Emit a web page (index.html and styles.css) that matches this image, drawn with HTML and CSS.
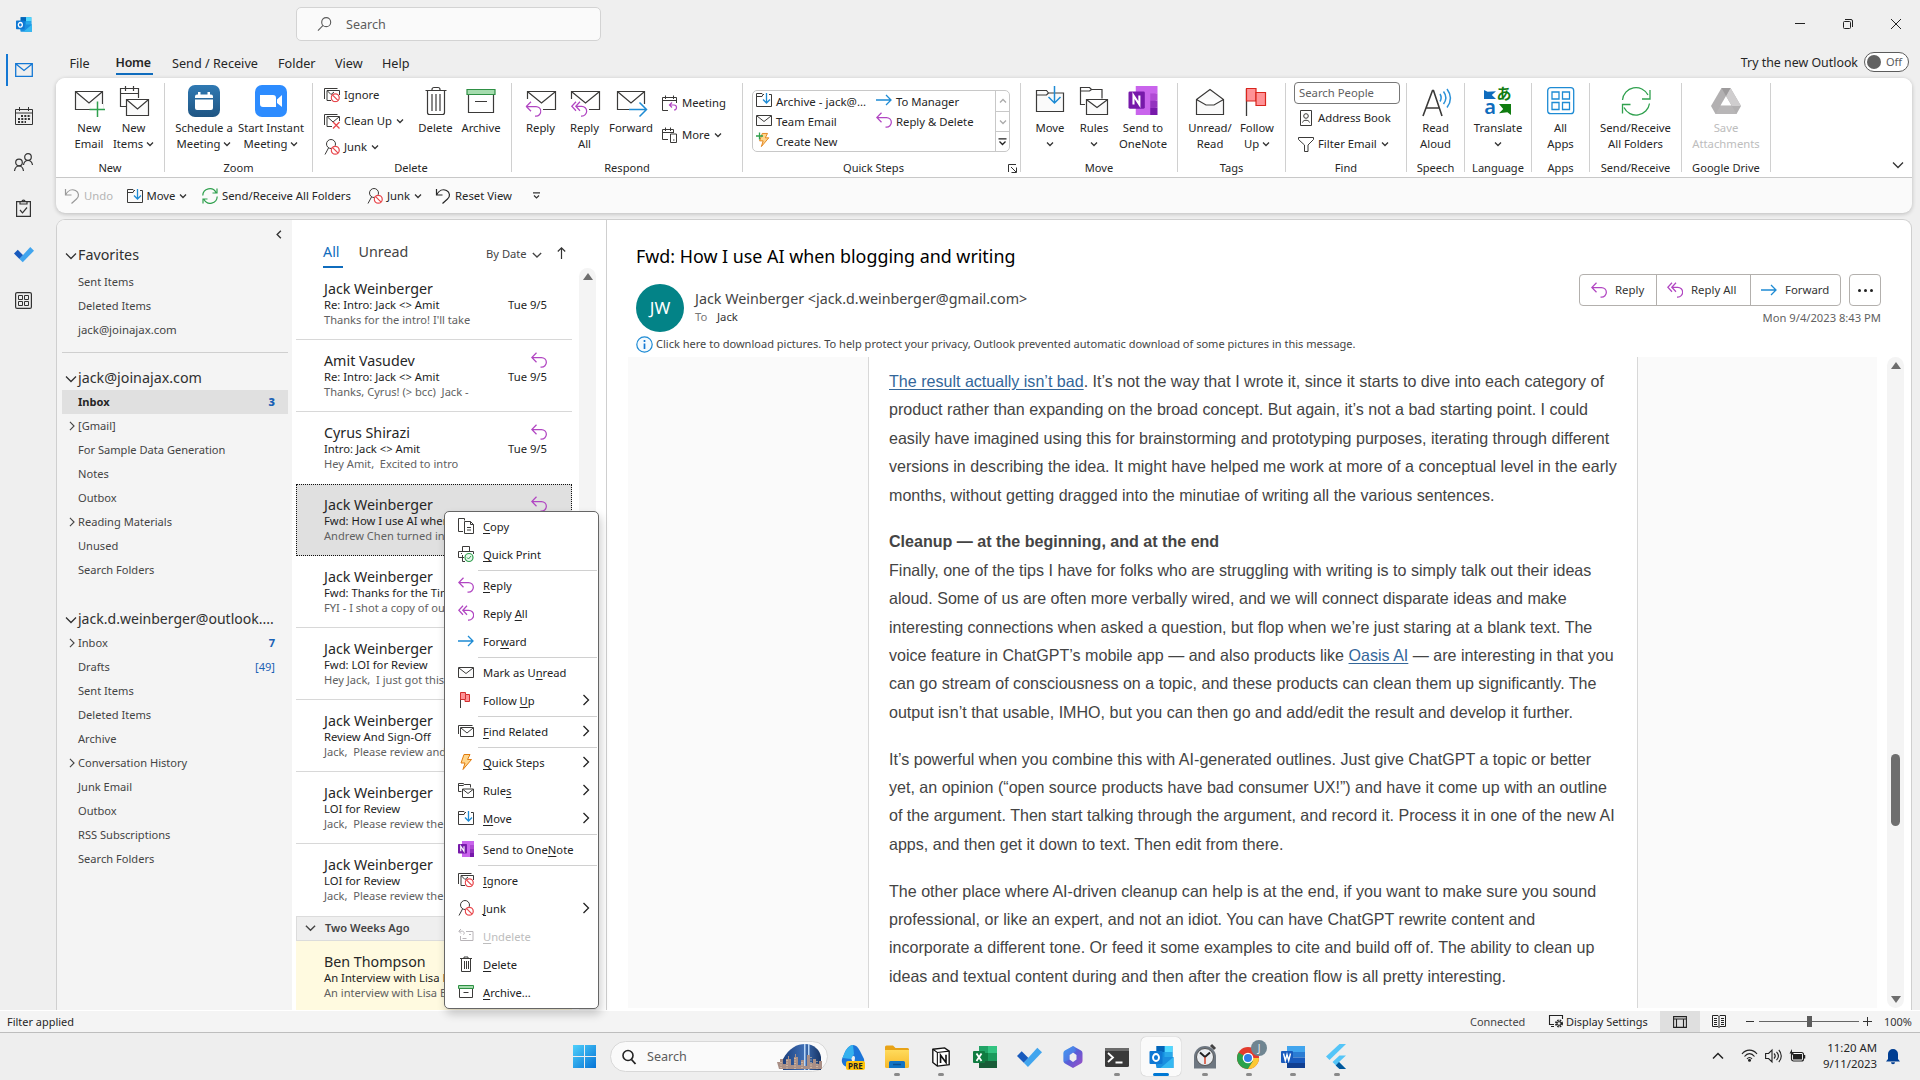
FILE: index.html
```html
<!DOCTYPE html>
<html lang="en">
<head>
<meta charset="utf-8">
<title>Inbox - Outlook</title>
<link rel="stylesheet" href="styles.css">
</head>
<body>
<svg class="defs" width="0" height="0" aria-hidden="true">
  <defs>
    <linearGradient id="g-win" x1="0" y1="0" x2="1" y2="1"><stop offset="0" stop-color="#4fd0fb"/><stop offset="1" stop-color="#0573d6"/></linearGradient>
    <linearGradient id="g-sched" x1="0" y1="0" x2="0" y2="1"><stop offset="0" stop-color="#2f79b3"/><stop offset="1" stop-color="#1f5583"/></linearGradient>
    <linearGradient id="g-365" x1="0" y1="0" x2="1" y2="1"><stop offset="0" stop-color="#3aa5f2"/><stop offset=".5" stop-color="#5b5bd6"/><stop offset="1" stop-color="#a34fc4"/></linearGradient>
    <linearGradient id="g-fold" x1="0" y1="0" x2="0" y2="1"><stop offset="0" stop-color="#ffdb5c"/><stop offset="1" stop-color="#f7b92a"/></linearGradient>
    <linearGradient id="g-sky" x1="0" y1="0" x2="1" y2="0"><stop offset="0" stop-color="#1c3f7d"/><stop offset=".55" stop-color="#3f6fb5"/><stop offset="1" stop-color="#173566"/></linearGradient>
  </defs>
  <symbol id="chev" viewBox="0 0 8 8"><path d="M1 2.5 4 5.5 7 2.5" fill="none" stroke="currentColor" stroke-width="1.3"/></symbol>
  <symbol id="chevr" viewBox="0 0 8 12"><path d="M1.5 1 6.5 6 1.5 11" fill="none" stroke="currentColor" stroke-width="1.3"/></symbol>
  <symbol id="chevd" viewBox="0 0 12 8"><path d="M1 1.5 6 6.5 11 1.5" fill="none" stroke="currentColor" stroke-width="1.3"/></symbol>
  <symbol id="mail" viewBox="0 0 16 16"><path d="M.5 3.5h15v10H.5zM1 4l7 5.5L15 4" fill="#fafafa" stroke="currentColor"/></symbol>
  <symbol id="reply" viewBox="0 0 16 16"><path d="M5.5.8.8 5.5l4.7 4.7M.8 5.5h9.7a4.6 4.6 0 0 1 0 9.7H9.5" fill="none" stroke="#b146c2" stroke-width="1.25"/></symbol>
  <symbol id="replyall" viewBox="0 0 16 16"><path d="M5 .8.8 5.3 5 9.8M9 .8 4.8 5.3 9 9.8M4.8 5.3h6a4.5 4.5 0 0 1 0 9.7H10" fill="none" stroke="#b146c2" stroke-width="1.25"/></symbol>
  <symbol id="forward" viewBox="0 0 16 16"><path d="M0 8h15M10 3l5 5-5 5" fill="none" stroke="#1e8bd4" stroke-width="1.3"/></symbol>
  <symbol id="no" viewBox="0 0 10 10"><circle cx="5" cy="5" r="4.2" fill="#fff" stroke="#e8474c" stroke-width="1.3"/><path d="M2.2 2.2l5.6 5.6" stroke="#e8474c" stroke-width="1.3"/></symbol>
  <symbol id="ignore" viewBox="0 0 16 16"><path d="M.5 12V1.500h13M7 13.500H3v-10h12.500V8M3.500 4l3.500 3.500L10 5" fill="none" stroke="#3b3a39"/><use href="#no" x="6.500" y="6" width="9.500" height="9.500"/></symbol>
  <symbol id="cleanup" viewBox="0 0 16 16"><path d="M.5 12V1.500h13M8 13.500H3v-10h12.500V8M3.500 4l5.500 5 6-5" fill="none" stroke="#3b3a39"/><path d="M9 9l6.500 6.500M15.500 9 9 15.500" stroke="#e8474c" stroke-width="1.3"/></symbol>
  <symbol id="junk" viewBox="0 0 16 16"><circle cx="7" cy="5" r="4.500" fill="none" stroke="#3b3a39"/><path d="M4.500 9 1 15.500" fill="none" stroke="#3b3a39"/><use href="#no" x="6.500" y="6.500" width="9.500" height="9.500"/></symbol>
  <symbol id="move" viewBox="0 0 16 16"><path d="M8 2.500H7L6 1.500H.5v13h15v-12H13M.5 4.500H6l1-2" fill="none" stroke="#3b3a39"/><path d="M10.500 1v9.500M7 7.500l3.500 3.500L14 7.500" fill="none" stroke="#1e8bd4" stroke-width="1.3"/></symbol>
  <symbol id="rules" viewBox="0 0 16 16"><path d="M3.500 9.500h-3v-8h5l1 1h6v3M.5 3.500H5l1.500-1M4.500 7h11v8.500h-11zM5 7.500l5 4 5-4" fill="none" stroke="#3b3a39"/></symbol>
  <symbol id="sync" viewBox="0 0 16 16"><path d="M.8 7.500A7 7 0 0 1 14 4.500M15 .5v4.500h-4.500M15.200 8.500A7 7 0 0 1 2 11.500M1 15.500V11h4.500" fill="none" stroke="currentColor" stroke-width="1.2"/></symbol>
  <symbol id="undo" viewBox="0 0 16 16"><path d="M1.500 1v6h6M1.500 7C4 2 8 .8 11.500 2.500s4 6 1 8.500L7.500 15.500" fill="none" stroke="currentColor" stroke-width="1.2"/></symbol>
  <symbol id="bin" viewBox="0 0 16 16"><path d="M2 2.500h12M6 2.500v-1.500h4v1.500M3.500 2.500v13h9v-13M6.500 5v8M8.500 5v8M10.500 5v8" fill="none" stroke="#3b3a39"/></symbol>
  <symbol id="box" viewBox="0 0 16 16"><path d="M1.500 5v8.500h13V5M5.500 8.500h5" fill="none" stroke="#3b3a39"/><path d="M.5 1.500h15v3H.5z" fill="#a5dcae" stroke="#2f9045"/></symbol>
  <symbol id="flag" viewBox="0 0 16 16"><path d="M2.500 1v15" stroke="#3b3a39"/><path d="M2.500.5h5v2h4v7h-4.500v-2H2.500z" fill="#ff9296" stroke="#d32f2f"/><path d="M7.500 2.500v5" stroke="#d32f2f"/></symbol>
  <symbol id="bolt" viewBox="0 0 16 16"><path d="M6 .5h6L9.500 5.500h4L5 15.500 7 9H3z" fill="#ffd58a" stroke="#e07b0e"/></symbol>
  <symbol id="onenote" viewBox="0 0 32 32"><path d="M8 0h22v32H8z" fill="#c964ec"/><path d="M24 8h8v8h-8z" fill="#b04ad4"/><path d="M24 16h8v8h-8z" fill="#9332bf"/><path d="M24 24h8v8h-8z" fill="#7719aa"/><path d="M30 0h2v8h-8V0z" fill="#c964ec"/><rect y="6" width="18" height="19" rx="1.500" fill="#7719aa"/><path d="M5.500 20.500v-10L12 20.500v-10" fill="none" stroke="#fff" stroke-width="2.300"/></symbol>
  <symbol id="outlook" viewBox="0 0 24 24"><path d="M7 1h16v12H7z" fill="#1490df"/><path d="M15 1h8v6h-8z" fill="#50d9ff"/><path d="M7 1h8v6H7z" fill="#0364b8"/><path d="M15 7h8v6h-8z" fill="#28a8ea"/><path d="M5 12h19v11H7z" fill="#1a8fe0"/><path d="M24 12v11H11z" fill="#35b8f1"/><rect y="6" width="13" height="13" rx="1" fill="#0f78d4"/><ellipse cx="6.500" cy="12.500" rx="3" ry="3.500" fill="none" stroke="#fff" stroke-width="1.900"/></symbol>
  <symbol id="todo" viewBox="0 0 24 24"><path d="M0 11.500 4.500 7l6.500 6.500L6.500 18z" fill="#185abd"/><path d="M6.500 18 19.500 3.500 24 8 10.500 22z" fill="#41a5ee"/></symbol>
  <symbol id="mag" viewBox="0 0 16 16"><circle cx="9.800" cy="6" r="4.800" fill="none" stroke="currentColor" stroke-width="1.200"/><path d="M6.500 9.500 1 15" stroke="currentColor" stroke-width="1.200"/></symbol>
</svg>

<div class="app">
  <nav class="rail">
    <svg class="r-logo" width="16" height="17"><use href="#outlook"/></svg>
    <span class="r-item active"><svg width="18" height="14" viewBox="0 0 18 14"><path d="M.7.7h16.600v12.600H.7zM1 1l8 6.500L17 1" fill="none" stroke="#1478d4" stroke-width="1.300"/></svg></span>
    <span class="r-item"><svg width="18" height="18" viewBox="0 0 18 18"><path d="M.5 2.500h17v15H.5zM.5 6h17M4.500 0v4M13.500 0v4" fill="none" stroke="#333"/><path d="M6 9h10M3 12h12M3 15h8" stroke="#333" stroke-width="2" stroke-dasharray="2 1.300"/></svg></span>
    <span class="r-item"><svg width="19" height="19" viewBox="0 0 19 19"><g fill="none" stroke="#333" stroke-width="1.200"><circle cx="5" cy="9.500" r="3.300"/><path d="M.5 18c.5-3.500 2-5 4.500-5s4 1.500 4.500 5"/><circle cx="14" cy="4" r="3.300"/><path d="M9.500 12c.5-3.300 2-4.500 4.500-4.500s4 1.500 4.500 4.500"/></g></svg></span>
    <span class="r-item"><svg width="15" height="18" viewBox="0 0 15 18"><path d="M.6 2.600h13.800v14.800H.6zM4 5V2.600h2a1.500 1.500 0 0 1 3 0h2V5zM4 11l2.500 2.800L11 8.500" fill="none" stroke="#333" stroke-width="1.200"/></svg></span>
    <span class="r-item"><svg width="20" height="20"><use href="#todo"/></svg></span>
    <span class="r-item"><svg width="17" height="17" viewBox="0 0 17 17"><rect x=".6" y=".6" width="15.800" height="15.800" rx="1.500" fill="none" stroke="#333" stroke-width="1.200"/><path d="M3.500 3.500h4v4h-4zM9.500 3.500h4v4h-4zM3.500 9.500h4v4h-4zM9.500 9.500h4v4h-4z" fill="none" stroke="#333"/></svg></span>
  </nav>

  <div class="shell">
    <header class="titlebar">
      <div class="search"><svg width="15" height="16"><use href="#mag"/></svg><span>Search</span></div>
      <div class="winbtns">
        <svg width="10" height="10" viewBox="0 0 10 10"><path d="M0 4.500h10" stroke="#222"/></svg>
        <svg width="10" height="10" viewBox="0 0 10 10"><path d="M2 .5h6a1.500 1.500 0 0 1 1.500 1.500v6" fill="none" stroke="#222"/><rect x=".5" y="2.500" width="7" height="7" rx="1" fill="none" stroke="#222"/></svg>
        <svg width="10" height="10" viewBox="0 0 10 10"><path d="M0 0l10 10M10 0 0 10" stroke="#222"/></svg>
      </div>
    </header>
    <div class="tabs">
      <span>File</span><span class="on">Home</span><span>Send / Receive</span><span>Folder</span><span>View</span><span>Help</span>
      <div class="trynew">Try the new Outlook <span class="toggle"><i></i>Off</span></div>
    </div>

    <section class="ribbon">
      <div class="groups">
        <div class="grp g-new"><div class="btns">
          <div class="big w44"><svg width="32" height="32" viewBox="0 0 32 32"><path d="M2.500 5.500h27v18h-27zM3 6l13 11L29 6" fill="#fafafa" stroke="#3b3a39" stroke-width="1.200"/><path d="M18 18h12v12H18z" fill="#fff"/><path d="M24.500 15.500v15.500M16.500 23.500H32" stroke="#2fa04e" stroke-width="1.500"/></svg><b>New<br>Email</b></div>
          <div class="big w45"><svg width="32" height="32" viewBox="0 0 32 32"><path d="M9 20.500H2.500v-18h18V12M2.500 7.500h18M7.500 0v5M15.500 0v5" fill="none" stroke="#3b3a39" stroke-width="1.200"/><path d="M8.500 13.500h22v16h-22zM9 14l10.500 9L30 14" fill="#fafafa" stroke="#3b3a39" stroke-width="1.200"/></svg><b>New<br>Items <svg class="cv"><use href="#chev"/></svg></b></div>
        </div><em>New</em></div>

        <div class="grp g-zoom"><div class="btns">
          <div class="big w68"><svg width="32" height="32" viewBox="0 0 32 32"><rect width="32" height="32" rx="7" fill="url(#g-sched)"/><path d="M7 11.500a2 2 0 0 1 2-2h14a2 2 0 0 1 2 2V13H7zM7 14.500h18V23a2 2 0 0 1-2 2H9a2 2 0 0 1-2-2zM10 7h2.500v4H10zM19.500 7H22v4h-2.500z" fill="#fff"/></svg><b>Schedule a<br>Meeting <svg class="cv"><use href="#chev"/></svg></b></div>
          <div class="big w66"><svg width="32" height="32" viewBox="0 0 32 32"><rect width="32" height="32" rx="7" fill="#2d8cff"/><path d="M5 10h13a3 3 0 0 1 3 3v9H8a3 3 0 0 1-3-3zM22 14.500 27 10v12l-5-4z" fill="#fff"/></svg><b>Start Instant<br>Meeting <svg class="cv"><use href="#chev"/></svg></b></div>
        </div><em>Zoom</em></div>

        <div class="grp g-del"><div class="btns">
          <div class="smalls w90">
            <div><svg><use href="#ignore"/></svg>Ignore</div>
            <div><svg><use href="#cleanup"/></svg>Clean Up <svg class="cv"><use href="#chev"/></svg></div>
            <div><svg><use href="#junk"/></svg>Junk <svg class="cv"><use href="#chev"/></svg></div>
          </div>
          <div class="big w43"><svg width="32" height="32" viewBox="0 0 32 32"><path d="M5.500 4.500h21M12 4.500v-1a2 2 0 0 1 2-2h4a2 2 0 0 1 2 2v1M7.500 4.500v22a2 2 0 0 0 2 2h13a2 2 0 0 0 2-2v-22M12 8v17M16 8v17M20 8v17" fill="none" stroke="#3b3a39" stroke-width="1.200"/></svg><b>Delete</b></div>
          <div class="big w48"><svg width="32" height="32" viewBox="0 0 32 32"><path d="M3.500 9v17.500h25V9M10 15.500h12" fill="none" stroke="#3b3a39" stroke-width="1.200"/><path d="M2 3.500h28v5H2z" fill="#a5dcae" stroke="#2f9045" stroke-width="1.200"/></svg><b>Archive</b></div>
        </div><em>Delete</em></div>

        <div class="grp g-resp"><div class="btns">
          <div class="big w43"><svg width="32" height="32" viewBox="0 0 32 32"><path d="M2.500 13V5.500h28v18H18M3 6l13.500 11L30 6" fill="none" stroke="#3b3a39" stroke-width="1.200"/><use href="#reply" x=".5" y="15" width="16" height="16"/></svg><b>Reply</b></div>
          <div class="big w45"><svg width="32" height="32" viewBox="0 0 32 32"><path d="M2.500 13V5.500h28v18H20M3 6l13.500 11L30 6" fill="none" stroke="#3b3a39" stroke-width="1.200"/><use href="#replyall" x=".5" y="15" width="19" height="16"/></svg><b>Reply<br>All</b></div>
          <div class="big w48"><svg width="32" height="32" viewBox="0 0 32 32"><path d="M14 23.500H2.500v-18h27V18M3 6l13 11L29 6" fill="none" stroke="#3b3a39" stroke-width="1.200"/><path d="M14 23.500h17.500M24.500 16.500l7 7-7 7" fill="none" stroke="#1e8bd4" stroke-width="1.500"/></svg><b>Forward</b></div>
          <div class="smalls two">
            <div><svg viewBox="0 0 16 16"><path d="M6 15.500H.5v-13h14V8M.5 5.500h14M3.500.5V4M11.500.5V4" fill="none" stroke="#3b3a39"/><path d="M10 7.500 7.500 10l2.500 2.500M7.500 10H12a2.500 2.500 0 0 1 0 5" fill="none" stroke="#b146c2" stroke-width="1.200"/></svg>Meeting</div>
            <div><svg viewBox="0 0 16 16"><path d="M6 12.500H.5v-10h11V6M.5 5.500h11M3.500.5V4M8.500.5V4M8.500 7h6v8.500h-6zM11 13h1.500" fill="none" stroke="#3b3a39"/></svg>More <svg class="cv"><use href="#chev"/></svg></div>
          </div>
        </div><em>Respond</em></div>

        <div class="grp g-qs"><div class="btns">
          <div class="qsbox">
            <div class="qscol c1">
              <div><svg><use href="#move"/></svg>Archive - jack@...</div>
              <div><svg class="dk"><use href="#mail"/></svg>Team Email</div>
              <div><svg viewBox="0 0 16 16"><use href="#bolt" x="1" width="14" height="16"/><path d="M0 4h7M3.500.5v7" stroke="#2fa04e" stroke-width="1.300"/></svg>Create New</div>
            </div>
            <div class="qscol c2">
              <div><svg><use href="#forward"/></svg>To Manager</div>
              <div><svg><use href="#reply"/></svg>Reply &amp; Delete</div>
            </div>
            <div class="qsscroll"><i><svg class="cv up"><use href="#chev"/></svg></i><i><svg class="cv"><use href="#chev"/></svg></i><i class="dk"><svg width="9" height="8" viewBox="0 0 9 8"><path d="M.5.800h8M1.500 3.500l3 3 3-3" fill="none" stroke="#222" stroke-width="1.300"/></svg></i></div>
          </div>
        </div><em>Quick Steps<svg class="launch" width="9" height="9" viewBox="0 0 9 9"><path d="M.5 8V.5H8M3 3l5 5M8.500 3.500v5h-5" fill="none" stroke="#333"/></svg></em></div>

        <div class="grp g-move"><div class="btns">
          <div class="big w44"><svg width="32" height="32" viewBox="0 0 32 32"><path d="M2.500 4.500h10l2 2.500h15v18.500h-27zM2.500 9h10l2-2" fill="#fafafa" stroke="#3b3a39" stroke-width="1.200"/><path d="M20.500 0v17M14.500 11l6 6 6-6" fill="none" stroke="#1e8bd4" stroke-width="1.500"/></svg><b>Move<br><svg class="cv"><use href="#chev"/></svg></b></div>
          <div class="big w44"><svg width="32" height="32" viewBox="0 0 32 32"><path d="M7 18.500H2.500v-17h9l2 2h10.500v9M2.500 5h9l2-1.500" fill="none" stroke="#3b3a39" stroke-width="1.200"/><path d="M8.500 13.500h21v15h-21zM9 14l10 7.500L29 14" fill="#fafafa" stroke="#3b3a39" stroke-width="1.200"/></svg><b>Rules<br><svg class="cv"><use href="#chev"/></svg></b></div>
          <div class="big w54"><svg width="32" height="29" class="on32"><use href="#onenote"/></svg><b>Send to<br>OneNote</b></div>
        </div><em>Move</em></div>

        <div class="grp g-tags"><div class="btns">
          <div class="big w50"><svg width="32" height="32" viewBox="0 0 32 32"><path d="M2.500 13.500 16 3.500l13.500 10v15h-27zM2.500 13.500l9.500 5.500h8l9.500-5.500" fill="#fafafa" stroke="#3b3a39" stroke-width="1.200"/></svg><b>Unread/<br>Read</b></div>
          <div class="big w44"><svg width="32" height="32" viewBox="0 0 32 32"><path d="M5.500 3v27" stroke="#3b3a39" stroke-width="1.300"/><path d="M5.500 2.500H15v12.500H5.500z" fill="#ff9296" stroke="#d8251d" stroke-width="1.200"/><path d="M15 6.500h9.500v13H15z" fill="#ff9296" stroke="#d8251d" stroke-width="1.200"/></svg><b>Follow<br>Up <svg class="cv"><use href="#chev"/></svg></b></div>
        </div><em>Tags</em></div>

        <div class="grp g-find"><div class="btns find">
          <div class="people">Search People</div>
          <div class="frow"><svg viewBox="0 0 16 16"><path d="M2.500.5h11v15h-11zM13.500 3v9" fill="none" stroke="#3b3a39"/><circle cx="8" cy="6" r="2.300" fill="none" stroke="#3b3a39"/><path d="M4.500 12.500c.5-3 6.500-3 7 0" fill="none" stroke="#3b3a39"/></svg>Address Book</div>
          <div class="frow"><svg viewBox="0 0 16 16"><path d="M.5 1.500h15v2L10 9v6.500H6.500V9L.5 3.500z" fill="none" stroke="#3b3a39"/></svg>Filter Email <svg class="cv"><use href="#chev"/></svg></div>
        </div><em>Find</em></div>

        <div class="grp g-sp"><div class="btns mid">
          <div class="big"><svg width="32" height="32" viewBox="0 0 32 32"><path d="M3 30 12.500 4.500h1L22 30M6 22h13" fill="none" stroke="#3b3a39" stroke-width="1.600"/><path d="M20 8c1.500 2.500 1.500 5 0 7.500M23.500 5.500c3 4 3 8.500 0 12.500M27 3c4.500 6 4.500 12.500 0 18.500" fill="none" stroke="#2b92d8" stroke-width="1.500"/></svg><b>Read<br>Aloud</b></div>
        </div><em>Speech</em></div>
        <div class="grp g-la"><div class="btns mid">
          <div class="big"><div class="trans"><i class="fl1"></i><span class="ja">あ</span><span class="la">a</span><i class="fl2"></i></div><b>Translate<br><svg class="cv"><use href="#chev"/></svg></b></div>
        </div><em>Language</em></div>
        <div class="grp g-ap"><div class="btns mid">
          <div class="big"><svg width="32" height="32" viewBox="0 0 32 32"><g fill="none" stroke="#1e8bd4" stroke-width="1.300"><rect x="2.700" y="1.700" width="26" height="26" rx="3"/><path d="M7 6h7v7H7zM17.500 6h7v7h-7zM7 16.500h7v7H7zM17.500 16.500h7v7h-7z"/></g></svg><b>All<br>Apps</b></div>
        </div><em>Apps</em></div>
        <div class="grp g-sr"><div class="btns mid">
          <div class="big"><svg width="32" height="32" viewBox="0 0 32 32"><path d="M2.500 14A13.500 13.500 0 0 1 28 9M30 4v9h-8M29.500 17.500A13.500 13.500 0 0 1 4 21.500M2.500 27.500V18.500h8" fill="none" stroke="#2fa04e" stroke-width="1.300"/></svg><b>Send/Receive<br>All Folders</b></div>
        </div><em>Send/Receive</em></div>
        <div class="grp g-gd"><div class="btns mid dim">
          <div class="big"><svg width="32" height="32" viewBox="0 0 32 32"><path d="M11.500 2h9L31 20l-4.500 8h-21L1 20z" fill="#b2b0b1"/><path d="M16 10l5.500 9.500h-11z" fill="#fff"/><path d="M20.500 2 31 20h-9L16 10z" fill="#cfcdce"/><path d="M11.500 2h9L16 10z" fill="#9d9b9c"/><path d="M10.500 20H22l4.500 8h-21z" fill="#b8b6b7"/></svg><b>Save<br>Attachments</b></div>
        </div><em>Google Drive</em></div>
        <svg class="collapse" width="12" height="8"><use href="#chevd"/></svg>
      </div>
      <div class="qat">
        <div class="q1"><svg><use href="#undo"/></svg>Undo</div>
        <div class="q2"><svg><use href="#move"/></svg>Move <svg class="cv"><use href="#chev"/></svg></div>
        <div class="q3"><svg class="grn"><use href="#sync"/></svg>Send/Receive All Folders</div>
        <div class="q4"><svg><use href="#junk"/></svg>Junk <svg class="cv"><use href="#chev"/></svg></div>
        <div class="q5"><svg><use href="#undo"/></svg>Reset View</div>
        <svg class="more" width="9" height="8" viewBox="0 0 9 8"><path d="M1 .8h7M2 3.500l2.500 2.500L7 3.500" fill="none" stroke="#333" stroke-width="1.200"/></svg>
      </div>
    </section>

    <main class="main">
      <aside class="folders">
        <svg class="fold" width="6" height="9" viewBox="0 0 8 12"><path d="M6.500 1 1.500 6l5 5" fill="none" stroke="#333" stroke-width="1.800"/></svg>
        <h3 class="fav"><svg><use href="#chevd"/></svg>Favorites</h3>
        <div class="f">Sent Items</div><div class="f">Deleted Items</div><div class="f wide">jack@joinajax.com</div>
        <hr>
        <h3><svg><use href="#chevd"/></svg>jack@joinajax.com</h3>
        <div class="f sel">Inbox<b>3</b></div>
        <div class="f"><svg><use href="#chevr"/></svg>[Gmail]</div>
        <div class="f">For Sample Data Generation</div><div class="f">Notes</div><div class="f">Outbox</div>
        <div class="f"><svg><use href="#chevr"/></svg>Reading Materials</div>
        <div class="f">Unused</div><div class="f">Search Folders</div>
        <h3 class="acct"><svg><use href="#chevd"/></svg>jack.d.weinberger@outlook....</h3>
        <div class="f"><svg><use href="#chevr"/></svg>Inbox<b>7</b></div>
        <div class="f">Drafts<b class="n">[49]</b></div>
        <div class="f">Sent Items</div><div class="f">Deleted Items</div><div class="f">Archive</div>
        <div class="f"><svg><use href="#chevr"/></svg>Conversation History</div>
        <div class="f">Junk Email</div><div class="f">Outbox</div><div class="f">RSS Subscriptions</div><div class="f">Search Folders</div>
      </aside>

      <section class="list">
        <div class="lhead"><span class="all">All</span><span class="unread">Unread</span><span class="by">By Date</span><svg width="10" height="8" viewBox="0 0 12 8"><path d="M1 1.500 6 6.500 11 1.500" fill="none" stroke="#444" stroke-width="1.600"/></svg><svg class="up" width="9" height="12" viewBox="0 0 9 12"><path d="M4.500 12V1M.8 4.500l3.700-3.700 3.700 3.700" fill="none" stroke="#333" stroke-width="1.200"/></svg></div>
        <div class="lbody">
          <div class="msgs">
            <div class="m"><h4>Jack Weinberger</h4><p>Re: Intro: Jack &lt;&gt; Amit<time>Tue 9/5</time></p><q>Thanks for the intro! I'll take</q></div>
            <div class="m"><svg><use href="#reply"/></svg><h4>Amit Vasudev</h4><p>Re: Intro: Jack &lt;&gt; Amit<time>Tue 9/5</time></p><q>Thanks, Cyrus! (&gt; bcc)&nbsp; Jack -</q></div>
            <div class="m last"><svg><use href="#reply"/></svg><h4>Cyrus Shirazi</h4><p>Intro: Jack &lt;&gt; Amit<time>Tue 9/5</time></p><q>Hey Amit,&nbsp; Excited to intro</q></div>
            <div class="m cur"><svg><use href="#reply"/></svg><h4>Jack Weinberger</h4><p>Fwd: How I use AI when</p><q>Andrew Chen turned in</q></div>
            <div class="m"><h4>Jack Weinberger</h4><p>Fwd: Thanks for the Tim</p><q>FYI - I shot a copy of ou</q></div>
            <div class="m"><h4>Jack Weinberger</h4><p>Fwd: LOI for Review</p><q>Hey Jack,&nbsp; I just got this</q></div>
            <div class="m"><h4>Jack Weinberger</h4><p>Review And Sign-Off</p><q>Jack,&nbsp; Please review and</q></div>
            <div class="m"><h4>Jack Weinberger</h4><p>LOI for Review</p><q>Jack,&nbsp; Please review the</q></div>
            <div class="m last"><h4>Jack Weinberger</h4><p>LOI for Review</p><q>Jack,&nbsp; Please review the</q></div>
            <div class="weeks"><svg width="11" height="8" viewBox="0 0 12 8"><path d="M1 1.500 6 6.500 11 1.500" fill="none" stroke="#444" stroke-width="1.500"/></svg>Two Weeks Ago</div>
            <div class="m ben"><h4>Ben Thompson</h4><p>An Interview with Lisa E</p><q>An interview with Lisa E</q></div>
          </div>
          <div class="sbar"><i class="tri"></i></div>
        </div>
      </section>

      <article class="read">
        <h1>Fwd: How I use AI when blogging and writing</h1>
        <div class="from">
          <div class="ava">JW</div>
          <div class="who"><div>Jack Weinberger &lt;jack.d.weinberger@gmail.com&gt;</div><small><span>To</span>Jack</small></div>
          <div class="acts">
            <div class="row">
              <div class="seg"><span class="s1"><svg><use href="#reply"/></svg>Reply</span><span class="s2"><svg><use href="#replyall"/></svg>Reply All</span><span class="s3"><svg><use href="#forward"/></svg>Forward</span></div>
              <div class="dots"><i></i><i></i><i></i></div>
            </div>
            <time>Mon 9/4/2023 8:43 PM</time>
          </div>
        </div>
        <div class="info"><svg width="17" height="17" viewBox="0 0 17 17"><circle cx="8.500" cy="8.500" r="7.700" fill="#f5fafe" stroke="#1e8bd4" stroke-width="1.200"/><path d="M8.500 7.500V13M8.500 4v2" stroke="#1478d4" stroke-width="1.700"/></svg>Click here to download pictures. To help protect your privacy, Outlook prevented automatic download of some pictures in this message.</div>
        <div class="bodywrap">
          <div class="gutter">
            <div class="mailtext">
              <p><a>The result actually isn’t bad</a>. It’s not the way that I wrote it, since it starts to dive into each category of<br>product rather than expanding on the broad concept. But again, it’s not a bad starting point. I could<br>easily have imagined using this for brainstorming and prototyping purposes, iterating through different<br>versions in describing the idea. It might have helped me work at more of a conceptual level in the early<br>months, without getting dragged into the minutiae of writing all the various sentences.</p>
              <p><b>Cleanup — at the beginning, and at the end</b><br>Finally, one of the tips I have for folks who are struggling with writing is to simply talk out their ideas<br>aloud. Some of us are often more verbally wired, and we will connect disparate ideas and make<br>interesting connections when asked a question, but flop when we’re just staring at a blank text. The<br>voice feature in ChatGPT’s mobile app — and also products like <a>Oasis AI</a> — are interesting in that you<br>can go stream of consciousness on a topic, and these products can clean them up significantly. The<br>output isn’t that usable, IMHO, but you can then go and add/edit the result and develop it further.</p>
              <p>It’s powerful when you combine this with AI-generated outlines. Just give ChatGPT a topic or better<br>yet, an opinion (“open source products have bad consumer UX!”) and have it come up with an outline<br>of the argument. Then start talking through the argument, and record it. Process it in one of the new AI<br>apps, and then get it down to text. Then edit from there.</p>
              <p>The other place where AI-driven cleanup can help is at the end, if you want to make sure you sound<br>professional, or like an expert, and not an idiot. You can have ChatGPT rewrite content and<br>incorporate a different tone. Or feed it some examples to cite and build off of. The ability to clean up<br>ideas and textual content during and then after the creation flow is all pretty interesting.</p>
            </div>
          </div>
          <div class="sbar big"><i class="tri"></i><i class="thumb"></i><i class="tri dn"></i></div>
        </div>
      </article>
    </main>
  </div>
</div>

<footer class="status">
  <span class="filter">Filter applied</span>
  <span class="conn">Connected</span>
  <svg width="15" height="14" viewBox="0 0 15 14"><path d="M5 9.500H.5V.5h13V4M2 11.500h3" fill="none" stroke="#222" stroke-width="1.100"/><circle cx="10" cy="8.500" r="3" fill="none" stroke="#222" stroke-width="2" stroke-dasharray="1.500 .9"/><circle cx="10" cy="8.500" r="1.800" fill="none" stroke="#222"/></svg>
  <span class="disp">Display Settings</span>
  <span class="view"><svg width="14" height="12" viewBox="0 0 14 12"><path d="M.6.600h12.800v10.800H.6zM.6 3h12.800M3.500 3v8M10.500 3v8" fill="none" stroke="#222" stroke-width="1.100"/></svg></span>
  <svg class="book" width="14" height="13" viewBox="0 0 14 13"><path d="M.5.500H6l1 1 1-1h5.500v11H8l-1 1-1-1H.500zM7 1.500v11M2 3.500h3M2 5.500h3M2 7.500h3M2 9.500h3M9 3.500h3M9 5.500h3M9 7.500h3M9 9.500h3" fill="none" stroke="#222"/></svg>
  <i class="minus"></i>
  <span class="slider"><i></i></span>
  <svg width="9" height="9" viewBox="0 0 9 9"><path d="M0 4.500h9M4.500 0v9" stroke="#333"/></svg>
  <span class="pct">100%</span>
</footer>

<footer class="taskbar">
  <svg class="win" width="23" height="23" viewBox="0 0 23 23"><path d="M0 0h11v11H0zM12 0h11v11H12zM0 12h11v11H0zM12 12h11v11H12z" fill="url(#g-win)"/></svg>
  <div class="tsearch"><svg width="14" height="16" viewBox="0 0 14 16"><circle cx="6" cy="6.500" r="5" fill="none" stroke="#222" stroke-width="1.600"/><path d="M9.500 10.500l4 4.500" stroke="#222" stroke-width="1.800"/></svg><span>Search</span>
    <svg class="city" width="46" height="26" viewBox="0 0 46 26"><path d="M6 15C12 4 20 0 28 0c9 0 15 6 16 13v13H6z" fill="url(#g-sky)"/><path d="M27 0h1.500v26H27zM31 0h1.500v26H31z" fill="#b9d7f7"/><path d="M0 18h3v-3h3v5h3v-5h2v-3h1v3h2v6h3v-8h1v-3h1v3h2v8h3v-5h3v6h3V11h3v8h3v-4h3v5h3v-3h3v8H2z" fill="#a98f86"/><path d="M4 18v7M10 16v9M18 14v11M25 18v7M34 13v12M40 17v8" stroke="#f0d9b5" stroke-dasharray="1 1.500"/></svg>
  </div>
  <div class="apps">
    <span><svg width="24" height="24" viewBox="0 0 24 24"><path d="M12 0C9 0 6 3 4 7l-3 7c-1 4 2 8 6 8l5-4-2-5c0-3 4-3 4 0l-1 7 4 2c4 0 7-4 6-8l-4-8c-2-4-4-6-7-6z" fill="#1b74d8"/><path d="M12 0C9 0 6 3 4 7l-2.500 6 8.500 1 3-5z" fill="#35b1ee"/></svg><em>PRE</em></span>
    <span class="run"><svg width="24" height="24" viewBox="0 0 24 24"><path d="M0 2a1.500 1.500 0 0 1 1.500-1.500H8L10.500 3H22.500A1.500 1.500 0 0 1 24 4.500V22H0z" fill="#e8a317"/><path d="M0 5h24v16.500a1.500 1.500 0 0 1-1.500 1.500h-21A1.500 1.500 0 0 1 0 21.500z" fill="url(#g-fold)"/><path d="M4 23v-5.500A1.500 1.500 0 0 1 5.500 16h13a1.500 1.500 0 0 1 1.500 1.500V23z" fill="#1273c4"/><path d="M8 19.500h8" stroke="#0b4f8f" stroke-width="1.500"/></svg></span>
    <span class="run"><svg width="20" height="22" viewBox="0 0 22 24"><path d="M2 3.500 15 2l5 3.500v15L7 22l-5-4z" fill="#fff" stroke="#111" stroke-width="1.500"/><path d="M2 3.500 7 7l13-1.500M7 7v15" fill="none" stroke="#111" stroke-width="1.200"/><path d="M10.500 18.500V10l6 8V9.500" fill="none" stroke="#111" stroke-width="1.800"/></svg></span>
    <span><svg width="24" height="24" viewBox="0 0 24 24"><path d="M6 1h18v22H6z" fill="#21a366"/><path d="M15 1h9v7h-9z" fill="#33c481"/><path d="M6 8h9v8H6z" fill="#107c41"/><path d="M6 16h18v7H6z" fill="#185c37"/><path d="M15 16h9v-8h-9z" fill="#1c9a5c"/><rect y="6" width="12" height="12" rx="1" fill="#107c41"/><path d="M3.500 8.500l5 7.500M8.500 8.500l-5 7.500" stroke="#fff" stroke-width="1.800"/></svg></span>
    <span><svg width="25" height="25"><use href="#todo"/></svg></span>
    <span><svg width="24" height="24" viewBox="0 0 24 24"><path d="M12 1 20 5.500a3 3 0 0 1 1.500 2.500v8a3 3 0 0 1-1.500 2.500L12 23l-8-4.500A3 3 0 0 1 2.500 16V8A3 3 0 0 1 4 5.500zM12 7.500 8.500 10v4.500L12 17l3.500-2.500V10z" fill="url(#g-365)" fill-rule="evenodd"/><path d="M13 1 4 5.500A3 3 0 0 0 2.500 8v9l6-2.500V10L15 6z" fill="#4a8ff0" opacity=".5"/></svg></span>
    <span class="run"><svg width="24" height="24" viewBox="0 0 24 24"><rect y="3" width="24" height="19" rx="1.500" fill="#3a3a3a"/><path d="M0 3h24v3H0z" fill="#6b6b6b"/><path d="M3 8l5 4.500L3 17M10.500 17.500h7" fill="none" stroke="#fff" stroke-width="1.800"/></svg></span>
    <span class="run here"><svg width="25" height="24"><use href="#outlook"/></svg></span>
    <span class="run"><svg width="24" height="24" viewBox="0 0 24 24"><path d="M1 12a11 11 0 0 1 22 0v11.500H1z" fill="#6d7680"/><path d="M18 0l4 4" stroke="#444" stroke-width="3"/><circle cx="12" cy="12" r="8.500" fill="#e9ecef" stroke="#555"/><path d="M7 7.500l5 4.500 5-4.500" fill="none" stroke="#222" stroke-width="2"/><path d="M12 12v7" stroke="#d7462b" stroke-width="1.500"/></svg></span>
    <span class="run"><svg width="26" height="24" viewBox="0 0 26 24"><circle cx="12" cy="13" r="11" fill="#e33b2e"/><path d="M12 13 2.500 7.500A11 11 0 0 0 12 24l5-8z" fill="#2ba24c"/><path d="M12 13h11a11 11 0 0 1-11 11l5-8z" fill="#fcc934"/><circle cx="12" cy="13" r="5.300" fill="#fff"/><circle cx="12" cy="13" r="4" fill="#2f7de9"/></svg><em class="j">J</em></span>
    <span class="run"><svg width="24" height="24" viewBox="0 0 24 24"><path d="M6 1h18v6H6z" fill="#41a5ee"/><path d="M6 7h18v5.500H6z" fill="#2b7cd3"/><path d="M6 12.500h18V18H6z" fill="#185abd"/><path d="M6 18h18v5H6z" fill="#103f91"/><rect y="6" width="12" height="12" rx="1" fill="#185abd"/><path d="M2.500 8.500 4.300 15.500 6 9.500l1.700 6L9.500 8.500" fill="none" stroke="#fff" stroke-width="1.400"/></svg></span>
    <span class="run"><svg width="22" height="25" viewBox="0 0 22 25"><path d="M13.500 0H20L3.500 16 0 12.500z" fill="#54c5f8"/><path d="M13.500 11.500H20L13 18l7 7h-6.500l-7-7z" fill="#54c5f8"/><path d="M9.700 21.500 13 18l7 7h-6.500z" fill="#01579b"/></svg></span>
  </div>
  <div class="tray">
    <svg class="t1" width="12" height="8" viewBox="0 0 12 8"><path d="M1 6.500 6 1.500l5 5" fill="none" stroke="#222" stroke-width="1.500"/></svg>
    <svg class="t2" width="17" height="13" viewBox="0 0 17 13"><path d="M1 5C5-.3 12-.3 16 5M3.500 7.500c3-3.800 7-3.800 10 0M6 10c1.500-2 3.500-2 5 0" fill="none" stroke="#222" stroke-width="1.200"/><circle cx="8.500" cy="11.300" r="1.500" fill="#222"/></svg>
    <svg class="t3" width="17" height="14" viewBox="0 0 17 14"><path d="M.6 4.500h3L7 1v12L3.600 9.500h-3zM9 4.500c1.500 1.500 1.500 3.500 0 5M11.500 2.800c2.300 2.500 2.300 5.900 0 8.400M13.800 1c3.300 3.500 3.300 8.500 0 12" fill="none" stroke="#222" stroke-width="1.100"/></svg>
    <svg class="t4" width="17" height="13" viewBox="0 0 17 13"><rect x="2.500" y="3.500" width="12" height="8.500" rx="2" fill="#fff" stroke="#222" stroke-width="1.200"/><rect x="4" y="5" width="9" height="5.500" fill="#222"/><path d="M15.500 6v3.500" stroke="#222" stroke-width="1.500"/><path d="M3 0 .5 4.500h2.500L2 8l3.500-5H3z" fill="#222"/></svg>
    <div class="clock">11:20 AM<br>9/11/2023</div>
    <svg class="bell" width="14" height="16" viewBox="0 0 14 16"><path d="M2 11V6a5 5 0 0 1 10 0v5l2 2.500H0zM5 14.300h4a2 2 0 0 1-4 0z" fill="#003e92"/></svg>
  </div>
</footer>

<div class="menu">
  <div><svg viewBox="0 0 16 16"><path d="M5 13.500H.5V.5h6v2" fill="none" stroke="#3b3a39"/><path d="M6.500 3.500h6l3 3v9h-9zM12.500 3.500v3h3M9 9.500h4M9 12h4" fill="none" stroke="#3b3a39"/></svg><span><u>C</u>opy</span></div>
  <div><svg viewBox="0 0 16 16"><path d="M6 11.500H.5v-6h15V8M4.500 5.500v-5h7v5M4.500 9v6.500H7M3 7.500h1" fill="none" stroke="#3b3a39"/><circle cx="11" cy="11.500" r="4" fill="#e9f6ec" stroke="#2fa04e" stroke-width="1.200"/><path d="M9 11.500l1.500 1.500 2.500-3" fill="none" stroke="#2fa04e"/></svg><span><u>Q</u>uick Print</span></div>
  <hr>
  <div><svg><use href="#reply"/></svg><span><u>R</u>eply</span></div>
  <div><svg><use href="#replyall"/></svg><span>Reply <u>A</u>ll</span></div>
  <div><svg><use href="#forward"/></svg><span>For<u>w</u>ard</span></div>
  <hr>
  <div><svg class="dk"><use href="#mail"/></svg><span>Mark as U<u>n</u>read</span></div>
  <div><svg><use href="#flag"/></svg><span>Follow <u>U</u>p</span><svg class="ar"><use href="#chevr"/></svg></div>
  <hr>
  <div><svg viewBox="0 0 16 16"><path d="M.5 11V2.500h14M2.500 4.500h13v9h-13zM3 5l6 5 6-5" fill="none" stroke="#3b3a39"/></svg><span><u>F</u>ind Related</span><svg class="ar"><use href="#chevr"/></svg></div>
  <hr>
  <div><svg><use href="#bolt"/></svg><span><u>Q</u>uick Steps</span><svg class="ar"><use href="#chevr"/></svg></div>
  <div><svg><use href="#rules"/></svg><span>Rule<u>s</u></span><svg class="ar"><use href="#chevr"/></svg></div>
  <div><svg><use href="#move"/></svg><span><u>M</u>ove</span><svg class="ar"><use href="#chevr"/></svg></div>
  <hr>
  <div><svg><use href="#onenote"/></svg><span>Send to One<u>N</u>ote</span></div>
  <hr>
  <div><svg><use href="#ignore"/></svg><span><u>I</u>gnore</span></div>
  <div><svg><use href="#junk"/></svg><span><u>J</u>unk</span><svg class="ar"><use href="#chevr"/></svg></div>
  <div class="off"><svg viewBox="0 0 16 16"><path d="M8 3.500h7v9H2.500V8M11 6.500h2M4.500 10.500h4M3 1 .8 3.200 3 5.500M1 3.200h3.500a2 2 0 0 1 1 3.500" fill="none" stroke="#b8b4b8"/></svg><span><u>U</u>ndelete</span></div>
  <div><svg><use href="#bin"/></svg><span><u>D</u>elete</span></div>
  <div><svg><use href="#box"/></svg><span><u>A</u>rchive...</span></div>
</div>
</body>
</html>
```
FILE: styles.css
```css
* { box-sizing: border-box; }
body { margin: 0; width: 1920px; height: 1080px; overflow: hidden; position: relative; background: #efefef; font: 11.3px/16px "Noto Sans", sans-serif; color: #262626; white-space: nowrap; }
svg { flex: none; display: block; overflow: visible; }
h1, h3, h4, p { margin: 0; font-weight: 400; }
i { font-style: normal; display: block; }
hr { border: 0; margin: 0; }
.defs { position: absolute; }
.dk { color: #3b3a39; }
.grn { color: #2fa04e; }
.cv { display: inline-block; width: 8px; height: 8px; color: #333; }
.cv.up { transform: rotate(180deg); }

.app { display: flex; height: 1010px; }
.rail { width: 56px; flex: none; display: flex; flex-direction: column; padding-top: 16px; }
.r-logo { margin: 0 0 21px 16px; }
.r-item { height: 32px; margin-bottom: 14px; display: flex; align-items: center; justify-content: center; width: 47px; flex: none; }
.r-item.active { border-left: 2px solid #1478d4; margin-left: 6px; width: 42px; padding-right: 8px; }

.shell { flex: 1; min-width: 0; display: flex; flex-direction: column; }
.titlebar { height: 48px; display: flex; padding: 7px 19px 0 240px; justify-content: space-between; }
.search { width: 305px; height: 34px; border: 1px solid #d3d3d3; border-radius: 5px; background: #fafafa; display: flex; align-items: center; padding: 1px 0 0 20px; gap: 14px; font-size: 12.6px; color: #5c5c5c; }
.search svg { margin-top: -2px; }
.winbtns { display: flex; gap: 38px; padding-top: 12px; }
.tabs { height: 30px; display: flex; font-size: 12.65px; padding-left: 13.500px; align-items: flex-start; line-height: 24px; padding-top: 3px; }
.tabs > span { width: 56.500px; }
.tabs > span:nth-child(1) { width: 46px; }
.tabs > .on { width: auto; font-weight: 600; font-size: 12.4px; letter-spacing: -.2px; border-bottom: 2px solid #0f6cbd; height: 24px; margin-right: 19.500px; min-width: 37px; }
.tabs > span:nth-child(3) { width: 106px; }
.tabs > span:nth-child(4) { width: 57px; }
.tabs > span:nth-child(5) { width: 47px; }
.trynew { margin-left: auto; display: flex; gap: 6px; font-size: 12.4px; padding-right: 11px; }
.toggle { width: 45px; height: 20px; border: 1px solid #5c5c5c; border-radius: 10px; background: #fff; display: flex; align-items: center; font-size: 11px; color: #5c5c5c; gap: 5px; padding-left: 2px; margin-top: 1px; }
.toggle i { width: 14px; height: 14px; border-radius: 50%; background: #616161; }

.ribbon { width: 1856px; height: 135px; border-radius: 9px; background: #fafafa; box-shadow: 0 1px 4px rgba(0,0,0,.22); overflow: hidden; flex: none; }
.groups { height: 100px; background: #fff; border-bottom: 1px solid #c8c8c8; display: flex; padding-top: 5px; }
.grp { height: 89px; border-right: 1px solid #d0d0d0; display: flex; flex-direction: column; flex: none; }
.btns { height: 77px; flex: none; display: flex; padding-left: 7px; }
.mid { padding: 0; justify-content: center; }
.grp em { font-style: normal; text-align: center; line-height: 16px; font-size: 11.1px; position: relative; }
.launch { position: absolute; right: 3px; top: 4px; }
.g-new { width: 109px; } .g-new .btns { padding-left: 11px; }
.g-zoom { width: 148px; } .g-zoom .btns { padding-left: 5px; }
.g-zoom .big b { padding-top: 3px; } .g-zoom .big > svg { margin-top: 2px; }
.g-del { width: 199px; } .g-del .btns { padding-left: 11px; }
.g-del em { padding-right: 2px; }
.g-resp { width: 231px; }
.g-qs { width: 278px; } .g-qs .btns { padding-left: 9px; }
.g-qs em { padding-right: 16px; }
.g-move { width: 157px; } .g-tags { width: 108px; } .g-find { width: 121px; } .g-sp { width: 58px; } .g-la { width: 67px; } .g-ap { width: 58px; } .g-sr { width: 92px; } .g-gd { width: 89px; }
.big { display: flex; flex-direction: column; align-items: center; text-align: center; }
.big > svg { margin-top: 3px; }
.big .on32 { margin-bottom: 3px; }
.big b { font-weight: 400; padding-top: 2px; }
.w43 { width: 43px; } .w44 { width: 44px; } .w45 { width: 45px; } .w48 { width: 48px; } .w50 { width: 50px; } .w54 { width: 54px; } .w66 { width: 66px; } .w68 { width: 68px; } .w90 { width: 90px; }
.smalls { margin-top: -1px; }
.smalls > div { display: flex; align-items: center; gap: 4px; height: 26px; }
.smalls > div > svg:first-child { width: 16px; height: 16px; }
.smalls.two { padding: 4px 0 0 7px; margin-top: 0; }
.smalls.two > div { height: 32px; }
.qsbox { width: 258px; height: 62px; margin-top: 7px; border: 1px solid #c8c8c8; border-radius: 5px; display: flex; }
.qscol { padding-left: 3px; }
.qscol > div { height: 20px; display: flex; gap: 4px; align-items: center; padding-top: 1px; }
.qscol svg { width: 16px; height: 16px; margin-top: -4px; }
.c1 { width: 120px; } .c2 { flex: 1; }
.c1 > div:first-child { font-size: 11.5px; }
.qsscroll { width: 14px; border-left: 1px solid #c8c8c8; }
.qsscroll i { height: 20px; display: flex; align-items: center; justify-content: center; }
.qsscroll i + i { border-top: 1px solid #c8c8c8; }
.qsscroll .cv { color: #aaa; }
.find { flex-direction: column; padding-left: 8px; }
.people { width: 106px; height: 22px; border: 1px solid #777; border-radius: 4px; color: #616161; padding-left: 4px; line-height: 20px; margin-top: -1px; }
.frow { display: flex; align-items: center; height: 26px; gap: 4px; padding: 2px 0 0 4px; }
.frow svg:first-child { width: 16px; height: 16px; }
.trans { width: 28px; height: 32px; margin-top: 3px; display: grid; grid-template: 14px 16px / 12px 16px; line-height: 14px; }
.trans .ja { font: 700 15px/14px "Noto Sans CJK JP", sans-serif; color: #107c10; }
.trans .la { font-size: 20px; line-height: 13px; color: #0f6cbd; font-weight: 600; }
.fl1 { width: 12px; height: 9px; margin-top: 4px; background: #0f6cbd; clip-path: polygon(0 0,30% 20%,100% 15%,65% 55%,100% 100%,0 100%); }
.fl2 { width: 12px; height: 11px; margin: 4px 0 0 3px; background: #107c10; clip-path: polygon(0 0,100% 0,100% 100%,70% 75%,0 85%,35% 45%); }
.dim b { color: #bdbdbd; }
.collapse { margin: 78px 8px 0 auto; color: #333; }
.qat { height: 35px; display: flex; align-items: center; padding-left: 8px; }
.qat > div { display: flex; align-items: center; gap: 4px; }
.qat > div > svg:first-child { width: 16px; height: 16px; }
.q1 { width: 62.500px; color: #b5b5b5; } .q1 svg { color: #999; }
.q2 { width: 75.500px; } .q3 { width: 165px; } .q4 { width: 68px; } .q5 { width: 97px; }

.main { margin-top: 6px; width: 1856px; flex: 1; border: 1px solid #cfcfcf; border-bottom: 0; border-radius: 9px 9px 0 0; background: #fff; display: flex; overflow: hidden; }
.folders { width: 235px; flex: none; background: #f4f4f4; padding: 20px 4px 0 5px; color: #444; position: relative; font-size: 11.1px; }
.fold { position: absolute; right: 10px; top: 10px; }
.folders h3 { height: 25px; font-size: 14.3px; line-height: 25px; display: flex; align-items: center; gap: 1px; padding-left: 3px; color: #303030; }
.folders h3 svg { width: 12px; height: 8px; margin-top: 2px; }
.folders .fav { height: 30px; line-height: 30px; }
.folders .acct { height: 25px; margin-top: 24px; font-size: 14.05px; }
.folders hr { height: 1px; background: #cfcfcf; margin: 10px 0 12px; }
.f { height: 24px; line-height: 24px; padding: 0 13px 0 16px; display: flex; align-items: center; }
.f.wide { font-size: 11.4px; }
.f svg { width: 8px; height: 10px; margin: 0 2px 0 -10px; }
.f b { margin-left: auto; color: #1b62b5; }
.f b.n { font-weight: 400; }
.sel { background: #e0e0e0; font-weight: 700; color: #262626; }

.list { width: 315px; flex: none; border-right: 1px solid #cfcfcf; display: flex; flex-direction: column; }
.lhead { height: 48px; display: flex; padding: 22px 0 0 31px; font-size: 14.3px; line-height: 20px; color: #444; flex: none; }
.all { color: #0f6cbd; border-bottom: 2px solid #0f6cbd; width: 20px; height: 26px; margin-right: 15.500px; }
.unread { width: 127.500px; }
.by { width: 46px; font-size: 11.2px; line-height: 23px; }
.lhead > svg { margin-top: 9px; }
.lhead .up { margin: 5px 0 0 15px; }
.lbody { flex: 1; display: flex; justify-content: space-between; padding: 0 10px 0 4px; min-height: 0; }
.msgs { width: 276px; }
.m { height: 72px; border-bottom: 1px solid #d8d8d8; padding: 12px 25px 0 28px; position: relative; overflow: hidden; }
.m > svg { width: 16px; height: 16px; position: absolute; right: 25px; top: 12px; }
.m h4 { font-size: 14.28px; line-height: 18px; height: 17px; color: #262626; }
.m p { font-size: 11.25px; line-height: 15px; height: 15px; display: flex; justify-content: space-between; color: #1d1d1d; }
.m q { quotes: none; font-size: 11.1px; line-height: 15px; height: 15px; display: block; color: #616161; }
.m.last { border-bottom-color: #fff; }
.m.cur { background: #e0e0e0; border: 1px dotted #111; padding: 11px 24px 0 27px; }
.m.cur > svg { top: 11px; right: 24px; }
.weeks { height: 25px; background: #efefef; border: 1px solid #dcdcdc; display: flex; align-items: center; gap: 9px; padding: 0 0 1px 8px; font-weight: 600; font-size: 11.1px; color: #444; }
.ben { background: #fffae0; border: 0; }
.sbar { width: 17px; background: #f4f4f4; border-radius: 9px 9px 0 0; display: flex; flex-direction: column; align-items: center; padding-top: 5px; }
.tri { border: 5px solid transparent; border-top: 0; border-bottom: 7px solid #6e6e6e; }
.tri.dn { transform: rotate(180deg); margin-top: auto; }
.sbar.big { border-radius: 9px; padding-bottom: 5px; height: 651px; }
.thumb { width: 9px; height: 72px; border-radius: 5px; background: #6e6e6e; margin-top: 385px; }

.read { flex: 1; padding: 24px 7px 0 21px; display: flex; flex-direction: column; color: #262626; min-width: 0; }
.read h1 { font-size: 17.86px; line-height: 24px; color: #000; padding-left: 8px; height: 40px; }
.from { display: flex; padding-left: 8px; height: 52px; }
.ava { width: 48px; height: 48px; border-radius: 50%; background: #038387; color: #fff; font-size: 17px; line-height: 48px; text-align: center; }
.who { padding: 5px 0 0 11px; font-size: 14.3px; line-height: 19px; color: #444; }
.who small { display: block; font-size: 11.3px; line-height: 18px; color: #333; }
.who small span { color: #777; display: inline-block; width: 22px; }
.acts { margin: -10px 23px 0 auto; display: flex; flex-direction: column; align-items: flex-end; color: #616161; font-size: 11.2px; }
.acts .row { display: flex; gap: 8px; height: 35px; align-items: flex-start; }
.seg { display: flex; height: 32px; border: 1px solid #b3b0ad; border-radius: 4px; width: 262px; color: #333; font-size: 11.4px; }
.seg span { display: flex; align-items: center; padding-left: 11px; gap: 8px; }
.seg span + span { border-left: 1px solid #b3b0ad; }
.seg svg { width: 16px; height: 16px; }
.seg .s1 { width: 76px; } .seg .s2 { width: 94px; padding-left: 10px; } .seg .s3 { flex: 1; padding-left: 10px; }
.dots { width: 32px; height: 32px; border: 1px solid #b3b0ad; border-radius: 4px; display: flex; gap: 3px; align-items: center; justify-content: center; }
.dots i { width: 3px; height: 3px; border-radius: 50%; background: #222; }
.acts time { line-height: 18px; }
.info { height: 21px; display: flex; align-items: center; gap: 3px; padding: 0 0 5px 8px; font-size: 11.04px; color: #444; }
.bodywrap { flex: 1; display: flex; justify-content: space-between; min-height: 0; }
.gutter { width: 1249px; height: 651px; background: #fafafa; padding-left: 240px; }
.mailtext { width: 770px; height: 651px; background: #fff; border: 1px solid #d8d8d8; border-width: 0 1px; padding: 10px 0 0 20px; font: 16.07px/28.4px "Liberation Sans", Arial, sans-serif; color: #444; }
.mailtext p { margin-bottom: 18.4px; }
.mailtext a { color: #336699; text-decoration: underline; text-underline-offset: 2px; }

.status { height: 23px; background: #f4f4f4; border-bottom: 1px solid #bdbdbd; border-top: 1px solid #fff; display: flex; align-items: center; padding-left: 7px; font-size: 10.95px; }
.filter { width: 1463px; }
.conn { width: 79px; color: #444; }
.disp { width: 96px; padding-left: 2px; }
.view { width: 40px; height: 21px; background: #dfdfdf; display: flex; align-items: center; justify-content: center; }
.book { margin: 0 20px 0 12px; }
.minus { width: 8px; height: 1px; background: #333; margin-right: 5px; }
.slider { width: 100px; height: 11px; margin-right: 4px; background: linear-gradient(#666,#666) 0 5px/100% 1px no-repeat; }
.slider i { width: 5px; height: 11px; background: #5c5c5c; margin-left: 48px; }
.pct { margin-left: 12px; color: #333; }

.taskbar { height: 47px; background: #eee; display: flex; align-items: center; padding-left: 573px; }
.tsearch { width: 218px; height: 31px; border-radius: 16px; background: #fafafa; border: 1px solid #d8d8d8; margin-left: 14px; display: flex; align-items: center; padding-left: 11px; gap: 11px; font-size: 12.6px; color: #5c5c5c; }
.city { margin: 0 4px 0 auto; }
.apps { display: flex; padding-left: 3px; }
.apps > span { width: 40px; height: 39px; margin: 0 2px; display: flex; align-items: center; justify-content: center; position: relative; border-radius: 5px; }
.run::after { content: ""; position: absolute; left: 17px; bottom: 0; width: 6px; height: 3px; border-radius: 2px; background: #8a8a8a; }
.here { background: #fafafa; box-shadow: 0 0 1px #999; }
.apps .here::after { width: 16px; left: 12px; background: #0078d4; }
.apps em { position: absolute; left: 13px; bottom: 6px; background: #ffc40d; border-radius: 2px; font: 700 8px/9px "Noto Sans", sans-serif; color: #222; padding: 0 2px; }
.apps .j { left: 22px; bottom: 20px; width: 16px; height: 16px; border-radius: 50%; background: #6f8591; color: #e8edf0; font: 10px/16px "Noto Sans", sans-serif; text-align: center; padding: 0; }
.tray { margin-left: auto; display: flex; align-items: center; padding-right: 20px; }
.tray svg { margin-top: -2px; }
.t1 { margin-right: 17px; } .t2 { margin-right: 7px; } .t3 { margin-right: 7px; }
.clock { width: 71px; text-align: right; font-size: 11.4px; margin-top: -1px; }
.bell { margin-left: 9px; }

.menu { position: absolute; left: 444px; top: 511px; width: 155px; height: 498px; background: #fff; border: 1px solid #666; border-radius: 5px; padding-top: 1px; box-shadow: 2px 5px 10px rgba(0,0,0,.2); color: #222; font-size: 11.2px; }
.menu > div { height: 28px; display: flex; align-items: center; padding-left: 13px; }
.menu > div > svg:first-child { width: 16px; height: 16px; margin: -2px 9px 0 0; }
.menu hr { height: 1px; background: #d0d0d0; margin: 1px 1px 1px 33px; }
.menu u { text-underline-offset: 2px; }
.menu .ar { width: 8px; height: 12px; margin: -2px 8px 0 auto; }
.menu .off { color: #bdbdbd; }
```
